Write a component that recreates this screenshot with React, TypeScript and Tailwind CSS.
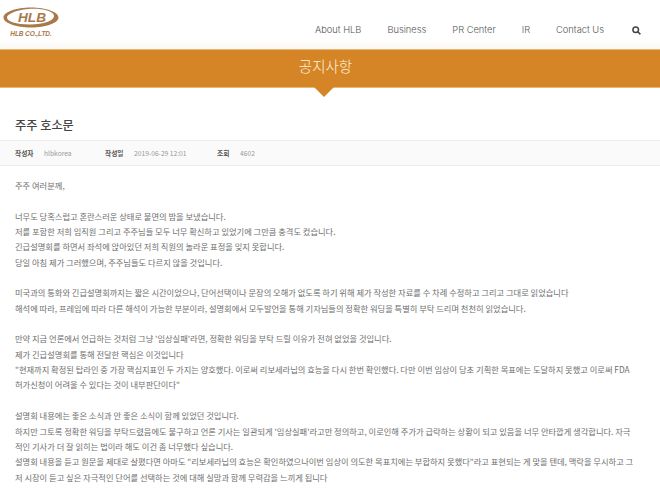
const nav = ["About HLB", "Business", "PR Center", "IR", "Contact Us"];

const paragraphs = [
  ["주주 여러분께,"],
  [
    "너무도 당혹스럽고 혼란스러운 상태로 불면의 밤을 보냈습니다.",
    "저를 포함한 저희 임직원 그리고 주주님들 모두 너무 확신하고 있었기에 그만큼 충격도 컸습니다.",
    "긴급설명회를 하면서 좌석에 앉아있던 저희 직원의 놀라운 표정을 잊지 못합니다.",
    "당일 아침 제가 그러했으며, 주주님들도 다르지 않을 것입니다.",
  ],
  [
    "미국과의 통화와 긴급설명회까지는 짧은 시간이었으나, 단어선택이나 문장의 오해가 없도록 하기 위해 제가 작성한 자료를 수 차례 수정하고 그리고 그대로 읽었습니다",
    "해석에 따라, 프레임에 따라 다른 해석이 가능한 부분이라, 설명회에서 모두발언을 통해 기자님들의 정확한 워딩을 특별히 부탁 드리며 천천히 읽었습니다.",
  ],
  [
    "만약 지금 언론에서 언급하는 것처럼 그냥 '임상실패'라면, 정확한 워딩을 부탁 드릴 이유가 전혀 없었을 것입니다.",
    "제가 긴급설명회를 통해 전달한 핵심은 이것입니다",
    "\"현재까지 확정된 탑라인 중 가장 핵심지표인 두 가지는 양호했다. 이로써 리보세라닙의 효능을 다시 한번 확인했다. 다만 이번 임상이 당초 기획한 목표에는 도달하지 못했고 이로써 FDA",
    "허가신청이 어려울 수 있다는 것이 내부판단이다\"",
  ],
  [
    "설명회 내용에는 좋은 소식과 안 좋은 소식이 함께 있었던 것입니다.",
    "하지만 그토록 정확한 워딩을 부탁드렸음에도 불구하고 언론 기사는 일관되게 '임상실패'라고만 정의하고, 이로인해 주가가 급락하는 상황이 되고 있음을 너무 안타깝게 생각합니다. 자극",
    "적인 기사가 더 잘 읽히는 법이라 해도 이건 좀 너무했다 싶습니다.",
    "설명회 내용을 듣고 원문을 제대로 살폈다면 아마도 \"리보세라닙의 효능은 확인하였으나이번 임상이 의도한 목표치에는 부합하지 못했다\"라고 표현되는 게 맞을 텐데, 맥락을 무시하고 그",
    "저 시장이 듣고 싶은 자극적인 단어를 선택하는 것에 대해 실망과 함께 무력감을 느끼게 됩니다",
  ],
];

const Logo = () => (
  <div className="flex flex-col items-center w-[56px] ml-[3px]">
    <svg width="56" height="21" viewBox="0 0 56 21">
      <path
        fillRule="evenodd"
        d="M28 .5C13 .5 .5 5 .5 10.5S13 20.5 28 20.5s27.500-4.500 27.500-10S43 .5 28 .5Zm2 1.300c11.500 0 21 2.700 21 7.200S41 17.500 27 17.500 4 14.500 4 10.500 17 1.800 30 1.800Z"
        fill="#a9794b"
      />
      <text
        x="29"
        y="15"
        textAnchor="middle"
        fontFamily="Liberation Sans, sans-serif"
        fontSize="13.5"
        fontWeight="700"
        fontStyle="italic"
        fill="#a9794b"
        textLength="28"
        lengthAdjust="spacingAndGlyphs"
      >
        HLB
      </text>
    </svg>
    <span className="font-['Liberation_Sans',sans-serif] text-[6.5px] leading-[8px] mt-[2px] font-bold italic tracking-[-0.1px] text-[#a9794b]">
      HLB CO.,LTD.
    </span>
  </div>
);

const App = () => {
  return (
    <div className="w-[660px] h-[495px] overflow-hidden bg-white font-['Noto_Sans_CJK_KR',sans-serif]">
      <header className="h-[49px] flex items-start justify-between bg-gradient-to-b from-white from-80% to-[#faf8f4] pt-[7px]">
        <Logo />
        <nav className="flex items-center gap-[26px] mt-[15px] pr-[19px] font-['Inter',sans-serif] font-light text-[9.3px] leading-[16px] text-[#555]">
          {nav.map((item) => (
            <span key={item}>{item}</span>
          ))}
          <svg className="ml-[2px]" width="9" height="9" viewBox="0 0 9 9" fill="none" stroke="#444" strokeWidth="1.5">
            <circle cx="3.7" cy="3.7" r="2.8" />
            <path d="M5.8 5.8 8.4 8.4" />
          </svg>
        </nav>
      </header>

      <div className="relative h-[39px] bg-[#d68526] border-y border-[#e6b777] flex items-center justify-center pr-[9px] pb-[6px]">
        <h1 className="text-[14.5px] font-light text-[#fdf1de]">공지사항</h1>
        <svg className="absolute left-[314px] top-full" width="20" height="10" viewBox="0 0 20 10">
          <path d="M0 0H20L10 10Z" fill="#d68526" />
        </svg>
      </div>

      <h2 className="mt-[28px] ml-[15px] text-[12.2px] leading-[18px] font-medium text-[#444]">주주 호소문</h2>

      <div className="mt-[6px] h-[26px] flex items-center px-[15px] bg-[#fafafa] border-y border-[#eeeeee] text-[6.7px] text-[#999]">
        <b className="font-bold text-[#555] w-[29px]">작성자</b>
        <span className="w-[61px]">hlbkorea</span>
        <b className="font-bold text-[#555] w-[29px]">작성일</b>
        <span className="w-[83px]">2019-06-29 12:01</span>
        <b className="font-bold text-[#555] w-[23px]">조회</b>
        <span>4602</span>
      </div>

      <div className="mt-[12px] px-[15px] text-[8.25px] leading-[15.35px] text-[#6e6e6e] whitespace-nowrap flex flex-col gap-[15.35px]">
        {paragraphs.map((lines, i) => (
          <div key={i}>
            {lines.map((line) => (
              <p key={line}>{line}</p>
            ))}
          </div>
        ))}
      </div>
    </div>
  );
};

export default App;
